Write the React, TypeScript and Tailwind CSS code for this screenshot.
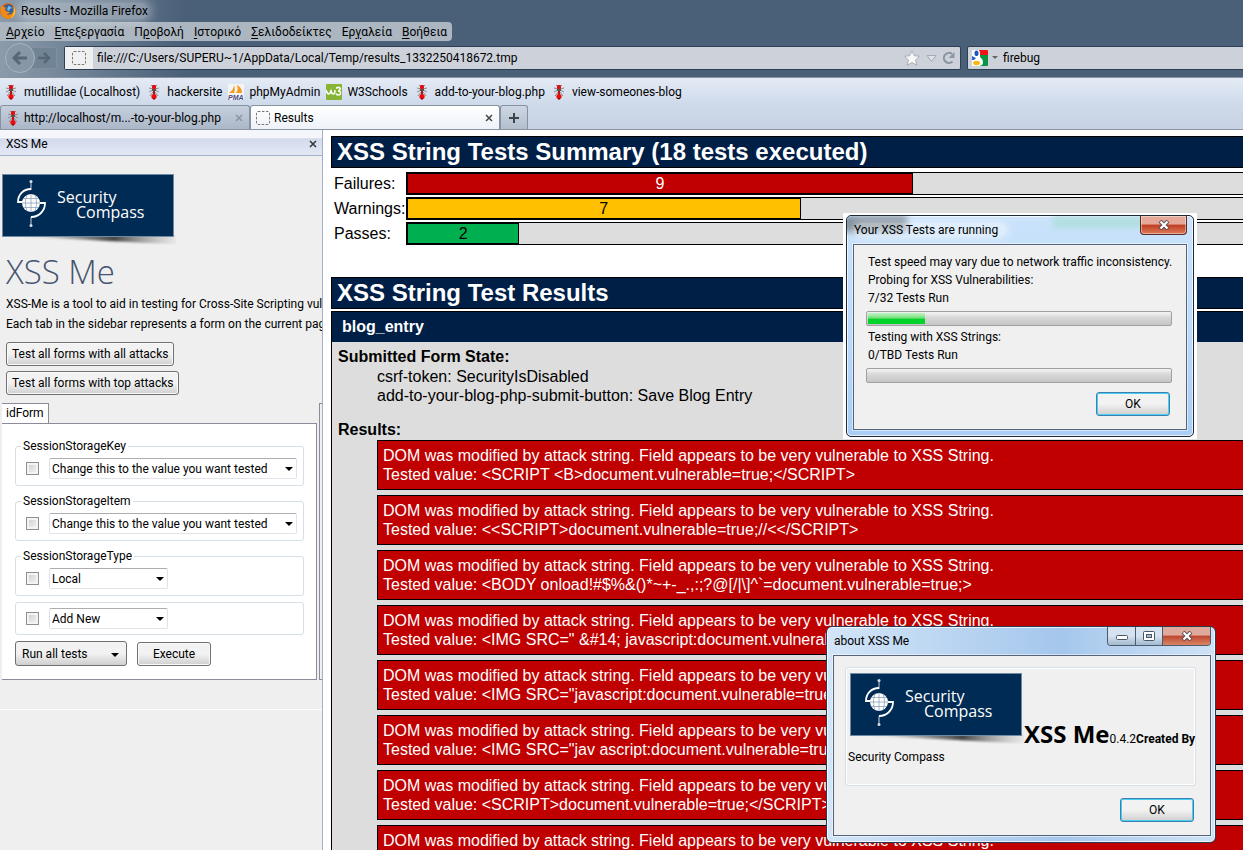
import { useState } from "react";
import type { ReactNode } from "react";

const menuItems = [
  { before: "", key: "Α", after: "ρχείο" },
  { before: "", key: "Ε", after: "πεξεργασία" },
  { before: "Π", key: "ρ", after: "οβολή" },
  { before: "", key: "Ι", after: "στορικό" },
  { before: "", key: "Σ", after: "ελιδοδείκτες" },
  { before: "Ερ", key: "γ", after: "αλεία" },
  { before: "", key: "Β", after: "οήθεια" },
];

const bookmarks = [
  { label: "mutillidae (Localhost)", icon: "ant" },
  { label: "hackersite", icon: "ant" },
  { label: "phpMyAdmin", icon: "pma" },
  { label: "W3Schools", icon: "w3" },
  { label: "add-to-your-blog.php", icon: "ant" },
  { label: "view-someones-blog", icon: "ant" },
];

const totalTests = 18;

const summary = [
  { label: "Failures:", count: 9, style: "bg-[#c00000] text-white" },
  { label: "Warnings:", count: 7, style: "bg-[#ffc000] text-black" },
  { label: "Passes:", count: 2, style: "bg-[#00b050] text-black" },
];

const attacks = [
  "<SCRIPT <B>document.vulnerable=true;</SCRIPT>",
  "<<SCRIPT>document.vulnerable=true;//<</SCRIPT>",
  "<BODY onload!#$%&()*~+-_.,:;?@[/|\\]^`=document.vulnerable=true;>",
  '<IMG SRC=" &#14; javascript:document.vulnerable=true;">',
  '<IMG SRC="javascript:document.vulnerable=true;">',
  '<IMG SRC="jav ascript:document.vulnerable=true;">',
  "<SCRIPT>document.vulnerable=true;</SCRIPT>",
  '<IMG SRC="jav&#x09;ascript:document.vulnerable=true;">',
];

const fields = [
  { name: "SessionStorageKey", value: "Change this to the value you want tested", wide: true },
  { name: "SessionStorageItem", value: "Change this to the value you want tested", wide: true },
  { name: "SessionStorageType", value: "Local", wide: false },
];

function AntIcon() {
  return (
    <svg width="16" height="16" viewBox="-2 0 16 16" className="shrink-0">
      <path
        d="M3 1l2 2M9 1L7 3M1 4l4 1M11 4L7 5M1 8l4-2M11 8L7 6M2 12l3-4M10 12L7 8"
        stroke="#8a8a8a"
        strokeWidth="1"
        fill="none"
      />
      <rect x="4" y="1" width="4" height="4" rx="1" fill="#e01010" />
      <rect x="5" y="5" width="2" height="5" fill="#3a2020" />
      <rect x="4" y="5" width="4" height="2" fill="#555" />
      <rect x="5" y="7" width="2" height="4" fill="#c01010" />
      <ellipse cx="6" cy="12.500" rx="2.600" ry="2.600" fill="#ee0a0a" />
      <path d="M5 15h2" stroke="#600" />
    </svg>
  );
}

function PmaIcon() {
  return (
    <svg width="16" height="16" viewBox="0 0 16 16" className="shrink-0">
      <rect width="16" height="16" fill="#f4f4f6" />
      <path d="M1 9C4 7 6 4 6 1c1 3 1 6 0 8zM8 9c2-2 2-5 1-8 4 2 5 5 5 8z" fill="#f79a14" />
      <text x="0" y="16" fontSize="7" fontWeight="bold" fontStyle="italic" fontFamily="Liberation Sans" fill="#4a4a80">
        PMA
      </text>
    </svg>
  );
}

function W3Icon() {
  return (
    <svg width="16" height="16" viewBox="0 0 16 16" className="shrink-0">
      <rect width="16" height="16" rx="1" fill="#86b535" />
      <path d="M0 6c1 4 2 4 3 4s2-3 2-3 1 3 2 3 2-1 2-4" stroke="#fff" strokeWidth="1.600" fill="none" />
      <path d="M10 4.500c2-2 5-1 4 1-.5 1.500-2 1.500-2 1.500s3 0 2.500 2.500c-.5 2-4 2-4.500 0" stroke="#fff" strokeWidth="1.600" fill="none" />
    </svg>
  );
}

function BlankPageIcon() {
  return (
    <svg width="16" height="16" viewBox="0 0 16 16" className="shrink-0">
      <rect x="1.500" y="1.500" width="13" height="13" rx="1.500" fill="none" stroke="#777" strokeDasharray="2.500 1.500" />
    </svg>
  );
}

function FirefoxIcon() {
  return (
    <svg width="16" height="16" viewBox="0 0 16 16" className="shrink-0">
      <circle cx="8" cy="8" r="7.800" fill="#d9620c" />
      <circle cx="8.500" cy="6.500" r="5.200" fill="#2c5f9e" />
      <path d="M8 3c2 0 3 1 4 2l-2 1-1 2-2-1z" fill="#7db7e4" />
      <path d="M.5 6C1 3 2.500 2 2.500 2l.5 2 3 .5L5 7l2 1.500 3 .5c-1 2-3 2-4 2 3 2 7 0 8-3.500C15.500 12 12 16 8 15.800 3 15.500 0 11 .5 6z" fill="#f08a16" />
      <path d="M13 3c2 2 3 5 2 8-1 2.500-3 4-5 4.500 3-2 5-6 3-12.500z" fill="#fbc02d" />
    </svg>
  );
}

function GoogleIcon() {
  return (
    <svg width="16" height="16" viewBox="0 0 16 16" className="shrink-0">
      <rect width="16" height="16" rx="1" fill="#fff" />
      <path d="M7 0h8a1 1 0 011 1v4H8z" fill="#f01414" />
      <path d="M8 5h8v10a1 1 0 01-1 1H8c3-3 2-5 0-7z" fill="#0b9444" />
      <path d="M0 6l4 2-2 2H0z" fill="#2a62c8" />
      <ellipse cx="4.500" cy="3.500" rx="3.600" ry="3.800" fill="#fff" />
      <ellipse cx="4.500" cy="3.300" rx="2" ry="2.800" fill="#1a56c4" />
      <path d="M6 7c4 2 5 5 3 8" stroke="#fff" strokeWidth="2" fill="none" />
      <ellipse cx="4.500" cy="13" rx="3.400" ry="2.200" fill="#f5b80c" />
    </svg>
  );
}

function DownArrow({ className = "" }: { className?: string }) {
  return (
    <svg width="8" height="4" viewBox="0 0 8 4" className={className}>
      <path d="M0 0h8L4 4z" fill="currentColor" />
    </svg>
  );
}

function SmallClose({ className = "" }: { className?: string }) {
  return (
    <svg width="8" height="8" viewBox="0 0 8 8" className={className}>
      <path d="M1 1l6 6M7 1L1 7" stroke="currentColor" strokeWidth="1.500" />
    </svg>
  );
}

function BookmarkIcon({ icon }: { icon: string }) {
  if (icon === "pma") return <PmaIcon />;
  if (icon === "w3") return <W3Icon />;
  return <AntIcon />;
}

function SecurityCompassLogo() {
  return (
    <svg width="174" height="71" viewBox="0 0 174 71" className="inline-block shrink-0">
      <defs>
        <linearGradient id="fold" x1="0" x2="1">
          <stop offset="0" stopColor="#555" stopOpacity="0" />
          <stop offset="0.6" stopColor="#333" stopOpacity="0.9" />
          <stop offset="1" stopColor="#999" stopOpacity="0.1" />
        </linearGradient>
        <filter id="soft" x="-5%" y="-20%" width="110%" height="150%">
          <feGaussianBlur stdDeviation="1" />
        </filter>
      </defs>
      <path d="M20 60h154v10c-44-1-94-5-154-7z" fill="url(#fold)" filter="url(#soft)" />
      <rect x="0.500" y="0.500" width="171" height="62" fill="#002b54" stroke="#6f8aa5" />
      <g stroke="#fff" fill="none">
        <path d="M29 7v9M29 43v9" stroke="#c9d4df" />
        <path d="M29 15c-8 0-13 6-13 13h5M29 43c8 0 14-6 14-14h-5" strokeWidth="1.800" />
      </g>
      <circle cx="29" cy="7.500" r="1.500" fill="#d5dde6" />
      <circle cx="29" cy="51.500" r="1.500" fill="#d5dde6" />
      <circle cx="29" cy="29" r="9" fill="#fff" />
      <path
        d="M20 29h18M21.500 24.500h15M21.500 33.500h15M29 20v18M25 21c-2 5-2 11 0 16M33 21c2 5 2 11 0 16"
        stroke="#8ea2b8"
        strokeWidth="0.800"
        fill="none"
      />
      <g fill="#fff" fontFamily="Open Sans, Noto Sans, sans-serif" fontSize="16">
        <text x="55" y="29">Security</text>
        <text x="74" y="44">Compass</text>
      </g>
    </svg>
  );
}

function ClassicButton({ children }: { children: ReactNode }) {
  return (
    <button className="h-6 whitespace-nowrap rounded-[3px] border border-[#707070] bg-linear-to-b from-[#f2f2f2] from-50% to-[#cfcfcf] px-[5px] leading-none shadow-[inset_0_0_0_1px_#fafafa]">
      {children}
    </button>
  );
}

function OkButton({ onClick }: { onClick: () => void }) {
  return (
    <button
      onClick={onClick}
      className="h-6 w-[74px] rounded-[3px] border border-[#3c7fb1] bg-linear-to-b from-[#f2f2f2] from-50% to-[#cfcfcf] leading-none shadow-[inset_0_0_0_1px_#48d0f0]"
    >
      OK
    </button>
  );
}

function TickBox({ label }: { label: string }) {
  return (
    <input
      type="checkbox"
      aria-label={label}
      className="size-[13px] shrink-0 appearance-none border border-[#8e8f8f] bg-linear-to-br from-[#c8ccd0] to-[#f8f8f8] shadow-[inset_0_0_0_2px_#f4f4f4] checked:bg-[#4a6a9a]"
    />
  );
}

function FieldSelect({ label, value, wide }: { label: string; value: string; wide: boolean }) {
  return (
    <div className={`relative ${wide ? "flex-1" : "w-[119px]"}`}>
      <select
        aria-label={label}
        className="block h-[21px] w-full appearance-none rounded-[2px] border border-[#e2e3ea] border-t-[#abadb3] bg-white pl-[2px] pr-4"
      >
        <option>{value}</option>
      </select>
      <DownArrow className="pointer-events-none absolute right-1 top-[9px]" />
    </div>
  );
}

function ProgressBar({ value }: { value: number }) {
  return (
    <div
      role="progressbar"
      aria-valuenow={value}
      className="h-[15px] rounded-[2px] border border-[#a0a0a0] bg-linear-to-b from-[#f0f0f0] from-10% via-[#d8d8d8] via-40% to-[#c6c6c6] p-px"
    >
      <div
        className="h-full bg-linear-to-b from-[#b4f0b8] from-10% via-[#6fe07c] via-45% to-[#00d32a] to-55%"
        style={{ width: `${value}%` }}
      />
    </div>
  );
}

function CloseGlyph() {
  return (
    <svg width="12" height="10" viewBox="0 0 12 10">
      <path d="M2 1l8 8M10 1L2 9" stroke="#5a4a50" strokeWidth="4" />
      <path d="M2.500 1.500l7 7M9.500 1.500l-7 7" stroke="#fff" strokeWidth="2.200" />
    </svg>
  );
}

function BrowserHeader() {
  return (
    <header className="bg-[#4a6078] bg-linear-to-r from-[#8b9bab] from-0% via-[#4a6078] via-15% to-[#4a6078] pb-[7px]">
      <div className="flex h-[22px] items-center gap-[5px]">
        <FirefoxIcon />
        <span className="rounded-full bg-white/30 shadow-[0_0_8px_4px_rgba(255,255,255,0.3)]">
          Results - Mozilla Firefox
        </span>
      </div>
      <nav className="flex h-[19px] w-fit items-center rounded-r bg-[#abb6c0] pl-px">
        {menuItems.map((item) => (
          <button key={item.key + item.after} className="px-[5px] leading-none">
            {item.before}
            <span className="underline underline-offset-2">{item.key}</span>
            {item.after}
          </button>
        ))}
      </nav>
      <div className="mt-1 flex h-[25px] items-center">
        <div className="flex w-[64px] items-center pl-[5px]">
          <button aria-label="Back" className="z-10 -my-1 flex size-[30px] items-center justify-center rounded-full border border-[#a9b5c0] bg-[#8797a6]">
            <svg width="16" height="14" viewBox="0 0 16 14">
              <path d="M15 7H3M8 1L2 7l6 6" stroke="#566878" strokeWidth="3" fill="none" />
            </svg>
          </button>
          <button aria-label="Forward" className="-ml-1 flex h-[22px] w-[26px] items-center justify-center rounded-r-[2px] border border-[#8090a0] bg-[#718496]">
            <svg width="13" height="12" viewBox="0 0 13 12">
              <path d="M0 6h10M6 1l5 5-5 5" stroke="#566878" strokeWidth="2.500" fill="none" />
            </svg>
          </button>
        </div>
        <div className="flex h-6 flex-1 items-center rounded-[2px] border border-[#2d3f52] bg-[#cdd2da]">
          <div className="flex h-full w-7 items-center justify-center bg-[#f0f0f0]">
            <BlankPageIcon />
          </div>
          <input
            aria-label="Address"
            defaultValue="file:///C:/Users/SUPERU~1/AppData/Local/Temp/results_1332250418672.tmp"
            className="h-full flex-1 bg-transparent pl-1 outline-none"
          />
          <svg width="54" height="16" viewBox="0 0 54 16" className="mr-[3px]">
            <path d="M9 .8l2.300 4.900 5.200.6-3.900 3.600 1.100 5.300L9 12.600l-4.700 2.600 1.100-5.300L1.500 6.300l5.200-.6z" fill="#f8f8f8" stroke="#a8adb5" />
            <path d="M24 5.500h9l-4.500 6z" fill="#dfe2e6" stroke="#a5abb4" />
            <path d="M49.500 11.500a5 5 0 11-.5-7.500" stroke="#8d97a3" strokeWidth="2.200" fill="none" />
            <path d="M51.500 2v6h-6z" fill="#8d97a3" />
          </svg>
        </div>
        <div className="ml-[6px] flex h-6 w-[276px] items-center rounded-l-[2px] border border-r-0 border-[#2d3f52] bg-[#cdd2da] pl-1">
          <GoogleIcon />
          <svg width="6" height="3" viewBox="0 0 6 3" className="ml-1">
            <path d="M0 0h6L3 3z" fill="#666" />
          </svg>
          <input aria-label="Search" defaultValue="firebug" className="h-full min-w-0 flex-1 bg-transparent pl-[5px] outline-none" />
        </div>
      </div>
    </header>
  );
}

function Toolbars() {
  return (
    <div className="border-b border-t border-[#8a94a2] bg-linear-to-b from-[#e4ebf5] via-[#cfdaeb] via-50% to-[#c6d1e3]">
      <div className="flex h-[27px] items-center gap-[6px] pl-[3px]">
        {bookmarks.map((item) => (
          <a key={item.label} href="#" className="flex items-center gap-[5px] whitespace-nowrap">
            <BookmarkIcon icon={item.icon} />
            {item.label}
          </a>
        ))}
      </div>
      <div className="flex h-6 items-stretch">
        <button className="flex w-[250px] items-center rounded-t-[3px] border border-b-0 border-[#8792a1] bg-linear-to-b from-[#c5cfde] to-[#abb7c8] pl-[4px] pr-[6px]">
          <AntIcon />
          <span className="flex-1 whitespace-nowrap pl-[3px] text-left">http://localhost/m...-to-your-blog.php</span>
          <SmallClose className="text-[#8a94a0]" />
        </button>
        <button className="flex w-[250px] items-center rounded-t-[3px] border border-b-0 border-[#8792a1] bg-linear-to-b from-white to-[#eef2f9] pl-[4px] pr-[6px]">
          <BlankPageIcon />
          <span className="flex-1 pl-[3px] text-left">Results</span>
          <SmallClose className="text-[#444]" />
        </button>
        <button aria-label="New tab" className="flex w-7 items-center justify-center rounded-t-[3px] border border-b-0 border-[#8792a1] bg-linear-to-b from-[#ced7e3] to-[#b3becd]">
          <svg width="10" height="10" viewBox="0 0 10 10">
            <path d="M5 0v10M0 5h10" stroke="#3c444e" strokeWidth="2" />
          </svg>
        </button>
      </div>
    </div>
  );
}

function Sidebar() {
  return (
    <aside className="flex w-[323px] shrink-0 flex-col overflow-hidden border-r border-[#a3b1c6] bg-[#efefef]">
      <div className="flex h-[26px] items-center justify-between border-b border-[#a5b3cb] bg-linear-to-b from-[#f4f6fb] from-30% via-[#d3daec] via-35% to-[#e2e8f5] pl-[6px] pr-[1px] pt-[2px]">
        XSS Me
        <button aria-label="Close sidebar" className="flex size-4 items-center justify-center">
          <SmallClose className="text-[#333]" />
        </button>
      </div>
      <div className="pl-[2px] pt-[18px]">
        <SecurityCompassLogo />
      </div>
      <div className="whitespace-nowrap pl-[6px]">
        <h1 className="mb-[2px] mt-[7px] font-['Open_Sans',sans-serif] text-[33px] font-light leading-10 text-[#44546f]">
          XSS Me
        </h1>
        <p className="leading-5">XSS-Me is a tool to aid in testing for Cross-Site Scripting vulnerabilities</p>
        <p className="leading-5">Each tab in the sidebar represents a form on the current page</p>
        <div className="mt-2 flex flex-col items-start gap-[5px]">
          <ClassicButton>Test all forms with all attacks</ClassicButton>
          <ClassicButton>Test all forms with top attacks</ClassicButton>
        </div>
      </div>
      <div className="mt-2 flex justify-between pl-[2px]">
        <button className="h-5 border border-b-0 border-l-0 border-[#8b8b99] bg-white px-[4px] pb-[2px] leading-none">idForm</button>
        <div className="w-[3px] border-l border-t border-[#8b8b99]" />
      </div>
      <div className="flex justify-between pl-[2px]">
        <form className="flex w-[315px] flex-col gap-[6px] border border-l-0 border-[#8b8b99] bg-white pb-[13px] pl-[13px] pr-[12px] pt-[13px]">
          {fields.map((field) => (
            <fieldset key={field.name} className="rounded-[3px] border border-[#d5dfe5] pb-[6px] pl-[10px] pr-[6px]">
              <legend className="-ml-[5px] px-[2px] leading-[18px]">{field.name}</legend>
              <div className="flex items-center gap-[10px] pt-[3px]">
                <TickBox label={`Test ${field.name}`} />
                <FieldSelect label={field.name} value={field.value} wide={field.wide} />
              </div>
            </fieldset>
          ))}
          <div className="flex items-center gap-[10px] rounded-[3px] border border-[#d5dfe5] px-[10px] py-[5px]">
            <TickBox label="Test new field" />
            <FieldSelect label="New field" value="Add New" wide={false} />
          </div>
          <div className="flex items-center gap-[10px]">
            <div className="relative w-[112px]">
              <select
                aria-label="Tests to run"
                className="block h-[25px] w-full appearance-none rounded-[3px] border border-[#707070] bg-linear-to-b from-[#f2f2f2] from-50% to-[#cfcfcf] pl-[6px]"
              >
                <option>Run all tests</option>
              </select>
              <DownArrow className="pointer-events-none absolute right-2 top-3" />
            </div>
            <button
              type="button"
              className="h-6 w-[74px] rounded-[3px] border border-[#707070] bg-linear-to-b from-[#f2f2f2] from-50% to-[#cfcfcf] leading-none shadow-[inset_0_0_0_1px_#fafafa]"
            >
              Execute
            </button>
          </div>
        </form>
        <div className="w-[3px] border-b border-l border-[#8b8b99]" />
      </div>
      <div className="mt-[29px] border-t border-white" />
    </aside>
  );
}

function Report() {
  return (
    <main className="min-w-0 flex-1 overflow-hidden bg-white pl-2 pt-[6px] font-['Liberation_Sans',Arial,sans-serif] text-base leading-[19px]">
      <div className="min-w-[1089px]">
        <h2 className="h-8 border border-black bg-[#001f47] pl-[5px] text-2xl font-bold leading-[30px] text-white">
          XSS String Tests Summary (18 tests executed)
        </h2>
        <div className="mt-1 flex flex-col gap-[2px]">
          {summary.map((row) => (
            <div key={row.label} className="flex items-center">
              <span className="w-[75px] pl-[3px]">{row.label}</span>
              <div className="h-[23px] flex-1 border border-black bg-[#ddd]">
                <div
                  className={`h-full border border-black text-center ${row.style}`}
                  style={{ width: `${(row.count / totalTests) * 100}%` }}
                >
                  {row.count}
                </div>
              </div>
            </div>
          ))}
        </div>

        <h2 className="mt-8 h-8 border border-black bg-[#001f47] pl-[5px] text-2xl font-bold leading-[30px] text-white">
          XSS String Test Results
        </h2>
        <section className="mt-[2px] border border-black bg-[#ddd]">
          <h3 className="bg-[#001f47] pl-[10px] font-bold leading-[30px] text-white">blog_entry</h3>
          <div className="pl-[6px] pt-[5px]">
            <h4 className="font-bold">Submitted Form State:</h4>
            <ul className="pl-[39px] pt-px">
              <li>csrf-token: SecurityIsDisabled</li>
              <li>add-to-your-blog-php-submit-button: Save Blog Entry</li>
            </ul>
            <h4 className="mt-[15px] font-bold">Results:</h4>
            <ul className="flex flex-col gap-[5px] pb-2 pl-[39px] pt-px">
              {attacks.map((attack, index) => (
                <li key={index} className="h-[50px] border border-black bg-[#c00000] px-[5px] py-[5px] text-white">
                  DOM was modified by attack string. Field appears to be very vulnerable to XSS String.
                  <br />
                  Tested value: {attack}
                </li>
              ))}
            </ul>
          </div>
        </section>
      </div>
    </main>
  );
}

function RunningDialog({ onClose }: { onClose: () => void }) {
  return (
    <div role="dialog" aria-label="Your XSS Tests are running" className="absolute left-[843px] top-[213px] bg-white px-[3px] py-[2px]">
      <div className="relative w-[348px] overflow-hidden rounded-[5px] border border-[#1e2a3a] bg-linear-to-b from-[#cbe3fb] via-[#bcdafb] to-[#a9cdf5] px-[6px] pb-[6px] shadow-[inset_0_0_0_1px_rgba(255,255,255,0.7)]">
        <div className="absolute -left-1 top-0 h-4 w-16 bg-[#7f8d9a] blur-[3px]" />
        <div className="absolute right-[36px] top-0 h-[13px] w-[104px] bg-[#b4dfe2] blur-[2px]" />
        <div className="relative flex h-7 items-center justify-between">
          <h2 className="pl-px">
            <span className="rounded-full bg-white/40 pr-2 shadow-[0_0_8px_2px_rgba(255,255,255,0.45)]">Your XSS Tests are running</span>
          </h2>
          <button
            onClick={onClose}
            aria-label="Close"
            className="flex h-[19px] w-[47px] items-center justify-center self-start rounded-b-[4px] border border-t-0 border-[#5b2a2a] bg-linear-to-b from-[#e6a898] from-45% via-[#c03c22] via-50% to-[#dc7a58] shadow-[inset_0_0_0_1px_rgba(255,255,255,0.4)]"
          >
            <CloseGlyph />
          </button>
        </div>
        <div className="relative border border-[#56657a] bg-[#f0f0f0] pb-[13px] pl-3 pr-[14px] pt-2 leading-[18px] outline outline-white/50">
          <p className="whitespace-nowrap pl-[2px]">Test speed may vary due to network traffic inconsistency.</p>
          <p className="pl-[2px]">Probing for XSS Vulnerabilities:</p>
          <p className="mb-1 pl-[2px]">7/32 Tests Run</p>
          <ProgressBar value={19} />
          <p className="mt-[2px] pl-[2px]">Testing with XSS Strings:</p>
          <p className="mb-1 pl-[2px]">0/TBD Tests Run</p>
          <ProgressBar value={0} />
          <div className="mt-[9px] flex justify-end pr-[2px]">
            <OkButton onClick={onClose} />
          </div>
        </div>
      </div>
    </div>
  );
}

function AboutDialog({ onClose }: { onClose: () => void }) {
  return (
    <div
      role="dialog"
      aria-label="about XSS Me"
      className="absolute left-[826px] top-[626px] w-[390px] rounded-[6px] border border-[#2b3b4f] bg-linear-to-r from-[#d3e5f8] via-[#a5c7ec] via-60% to-[#cfe2f6] pb-[6px] pl-[6px] pr-1 shadow-[inset_0_0_0_1px_rgba(255,255,255,0.7)]"
    >
      <div className="flex h-7 items-center justify-between">
        <h2 className="pl-px">about XSS Me</h2>
        <div className="flex h-[19px] self-start overflow-hidden rounded-b-[4px] border border-t-0 border-[#4d5a6c]">
          <button aria-label="Minimize" className="flex w-7 items-center justify-center border-r border-[#4d5a6c] bg-linear-to-b from-[#d5e2ef] from-50% to-[#a3b9d0]">
            <svg width="12" height="10" viewBox="0 0 12 10">
              <rect x="0.500" y="4.500" width="11" height="4" rx="1" fill="#fff" stroke="#4a5566" />
            </svg>
          </button>
          <button aria-label="Maximize" className="flex w-[27px] items-center justify-center border-r border-[#4d5a6c] bg-linear-to-b from-[#d5e2ef] from-50% to-[#a3b9d0]">
            <svg width="12" height="10" viewBox="0 0 12 10">
              <rect x="0.500" y="0.500" width="11" height="9" rx="1" fill="#fff" stroke="#4a5566" />
              <rect x="3.500" y="3.500" width="5" height="3" fill="#a9bdd2" stroke="#4a5566" />
            </svg>
          </button>
          <button
            onClick={onClose}
            aria-label="Close"
            className="flex w-[47px] items-center justify-center bg-linear-to-b from-[#dfa99c] from-45% via-[#bd4630] via-50% to-[#d98466]"
          >
            <CloseGlyph />
          </button>
        </div>
      </div>
      <div className="border border-[#56657a] bg-[#f0f0f0] pb-[13px] pl-[11px] pr-[14px] pt-[11px] outline outline-white/50">
        <div className="h-[119px] rounded-[3px] border border-[#d5dfe5] pl-[2px] pt-[5px] shadow-[inset_0_0_0_1px_#fff]">
          <div className="flex items-end whitespace-nowrap pl-[2px]">
            <SecurityCompassLogo />
            <p className="-mb-1 flex items-baseline">
              <b className="font-['Open_Sans',sans-serif] text-2xl leading-7">XSS Me</b>
              <span>0.4.2</span>
              <b>Created By</b>
            </p>
          </div>
          <p className="pt-1 leading-[18px]">Security Compass</p>
        </div>
        <div className="mt-3 flex justify-end pr-[2px]">
          <OkButton onClick={onClose} />
        </div>
      </div>
    </div>
  );
}

export default function App() {
  const [showRunning, setShowRunning] = useState(true);
  const [showAbout, setShowAbout] = useState(true);

  return (
    <div className="relative flex h-screen flex-col overflow-hidden font-['Roboto','Noto_Sans',sans-serif] text-xs text-black">
      <BrowserHeader />
      <Toolbars />
      <div className="flex min-h-0 flex-1">
        <Sidebar />
        <Report />
      </div>
      {showRunning && <RunningDialog onClose={() => setShowRunning(false)} />}
      {showAbout && <AboutDialog onClose={() => setShowAbout(false)} />}
    </div>
  );
}
